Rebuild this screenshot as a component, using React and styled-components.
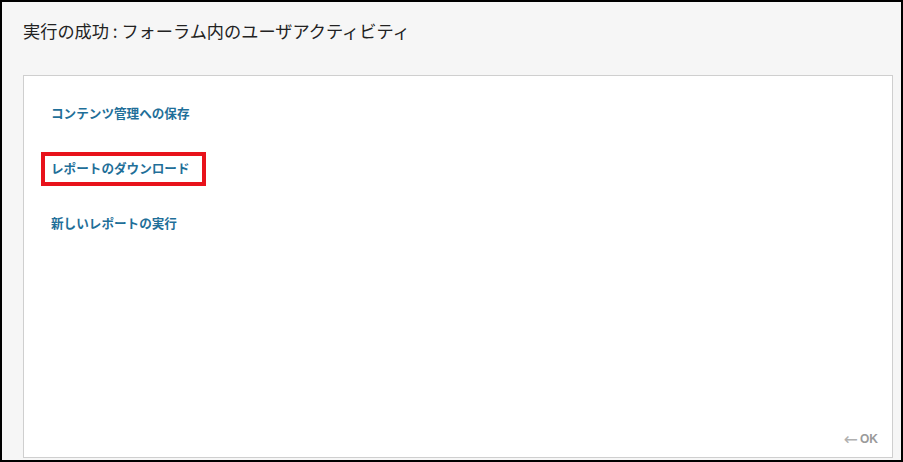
import React from 'react'
import styled, { createGlobalStyle } from 'styled-components'

const GlobalStyle = createGlobalStyle`
  html, body {
    margin: 0;
    padding: 0;
    background: #fff;
  }
  * { box-sizing: border-box; }
`

const links = [
  { name: 'コンテンツ管理への保存' },
  { name: 'レポートのダウンロード', marked: true },
  { name: '新しいレポートの実行' },
]

const App = () => {
  return (
    <>
      <GlobalStyle />
      <Frame>
        <Title>実行の成功 : フォーラム内のユーザアクティビティ</Title>
        <Panel>
          <LinkList>
            {links.map((item) => (
              <LinkItem key={item.name} $marked={item.marked}>
                {item.name}
              </LinkItem>
            ))}
          </LinkList>
          <Footer>
            <OkButton>
              <Arrow>←</Arrow>OK
            </OkButton>
          </Footer>
        </Panel>
      </Frame>
    </>
  )
}

export default App

/** STYLES */
const Frame = styled.div`
width: 903px;
height: 462px;
border: 2px solid #000;
background: #f6f6f6;
display: flex;
flex-direction: column;
font-family: "Noto Sans CJK JP", "Noto Sans", sans-serif;
`

const Title = styled.div`
height: 73px;
padding: 18px 0 0 21px;
font-size: 17.2px;
line-height: 22px;
color: #222;
`

const Panel = styled.div`
flex: 1;
margin: 0 8px 2px 21px;
background: #fff;
border: 1px solid #cfcfcf;
display: flex;
flex-direction: column;
`

const LinkList = styled.div`
display: flex;
flex-direction: column;
align-items: flex-start;
gap: 35px;
padding: 27px 0 0 27px;
`

const LinkItem = styled.a`
position: relative;
display: inline-block;
font-size: 12.6px;
font-weight: 700;
line-height: 20px;
color: #1f6f99;
cursor: pointer;

${({ $marked }) => $marked && `
  &::after {
    content: '';
    position: absolute;
    top: -6px;
    bottom: -8px;
    left: -10px;
    right: -16px;
    border: 4px solid #e8121b;
  }
`}
`

const Footer = styled.div`
margin-top: auto;
display: flex;
justify-content: flex-end;
padding: 0 14px 10px 0;
`

const OkButton = styled.span`
font-family: "Liberation Sans", Arial, sans-serif;
font-size: 12px;
font-weight: 700;
line-height: 16px;
color: #9a9a9a;
display: flex;
align-items: center;
gap: 2px;
`

const Arrow = styled.span`
font-family: "DejaVu Sans", sans-serif;
font-weight: 400;
font-size: 17px;
color: #b0b0b0;
`
